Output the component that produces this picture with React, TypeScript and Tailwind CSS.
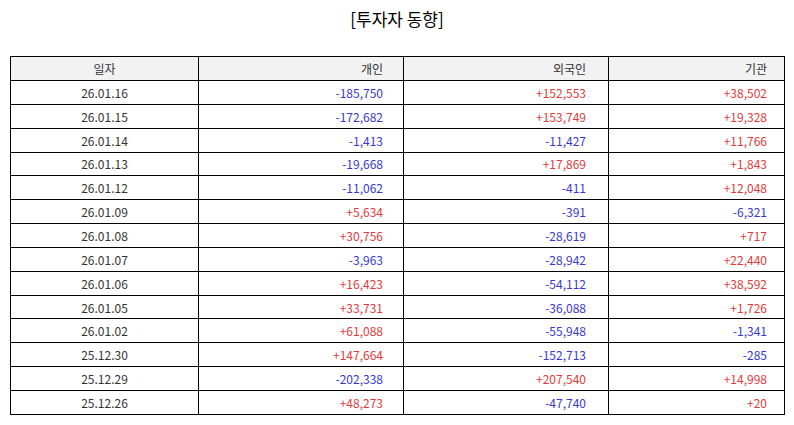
import React from 'react';

const rows = [
    { date: "26.01.16", indiv: "-185,750", foreign: "+152,553", inst: "+38,502" },
    { date: "26.01.15", indiv: "-172,682", foreign: "+153,749", inst: "+19,328" },
    { date: "26.01.14", indiv: "-1,413", foreign: "-11,427", inst: "+11,766" },
    { date: "26.01.13", indiv: "-19,668", foreign: "+17,869", inst: "+1,843" },
    { date: "26.01.12", indiv: "-11,062", foreign: "-411", inst: "+12,048" },
    { date: "26.01.09", indiv: "+5,634", foreign: "-391", inst: "-6,321" },
    { date: "26.01.08", indiv: "+30,756", foreign: "-28,619", inst: "+717" },
    { date: "26.01.07", indiv: "-3,963", foreign: "-28,942", inst: "+22,440" },
    { date: "26.01.06", indiv: "+16,423", foreign: "-54,112", inst: "+38,592" },
    { date: "26.01.05", indiv: "+33,731", foreign: "-36,088", inst: "+1,726" },
    { date: "26.01.02", indiv: "+61,088", foreign: "-55,948", inst: "-1,341" },
    { date: "25.12.30", indiv: "+147,664", foreign: "-152,713", inst: "-285" },
    { date: "25.12.29", indiv: "-202,338", foreign: "+207,540", inst: "+14,998" },
    { date: "25.12.26", indiv: "+48,273", foreign: "-47,740", inst: "+20" },
];

// 부호에 따라 색상
const tone = (v: string) => (v.startsWith('-') ? 'text-[#3838d0]' : 'text-[#e23a3a]');

const App = () => {
    return (
        <div className="w-[794px] h-[425px] bg-white px-[10px] pt-[7px] font-['Noto_Sans_CJK_KR','Noto_Sans',sans-serif] text-[#333]">
            <h1 className="text-center text-[17px] leading-[24px] text-black mb-[25px]">[투자자 동향]</h1>
            <table className="w-full table-fixed border-collapse text-[12px]">
                <colgroup>
                    <col className="w-[188px]" />
                    <col className="w-[205px]" />
                    <col className="w-[205px]" />
                    <col className="w-[176px]" />
                </colgroup>
                <thead>
                    <tr className="h-[24px] bg-[#f2f2f2]">
                        <th className="border border-black font-normal text-center p-0 leading-[21px]">일자</th>
                        <th className="border border-black font-normal text-right pr-[20px] p-0 leading-[21px]">개인</th>
                        <th className="border border-black font-normal text-right pr-[22px] p-0 leading-[21px]">외국인</th>
                        <th className="border border-black font-normal text-right pr-[17px] p-0 leading-[21px]">기관</th>
                    </tr>
                </thead>
                <tbody>
                    {rows.map(r => (
                        <tr key={r.date} className="h-[23.85px]">
                            <td className="border border-black text-center p-0 leading-[21px]">{r.date}</td>
                            <td className={`border border-black text-right pr-[20px] leading-[21px] ${tone(r.indiv)}`}>{r.indiv}</td>
                            <td className={`border border-black text-right pr-[22px] leading-[21px] ${tone(r.foreign)}`}>{r.foreign}</td>
                            <td className={`border border-black text-right pr-[17px] leading-[21px] ${tone(r.inst)}`}>{r.inst}</td>
                        </tr>
                    ))}
                </tbody>
            </table>
        </div>
    );
};

export default App;
